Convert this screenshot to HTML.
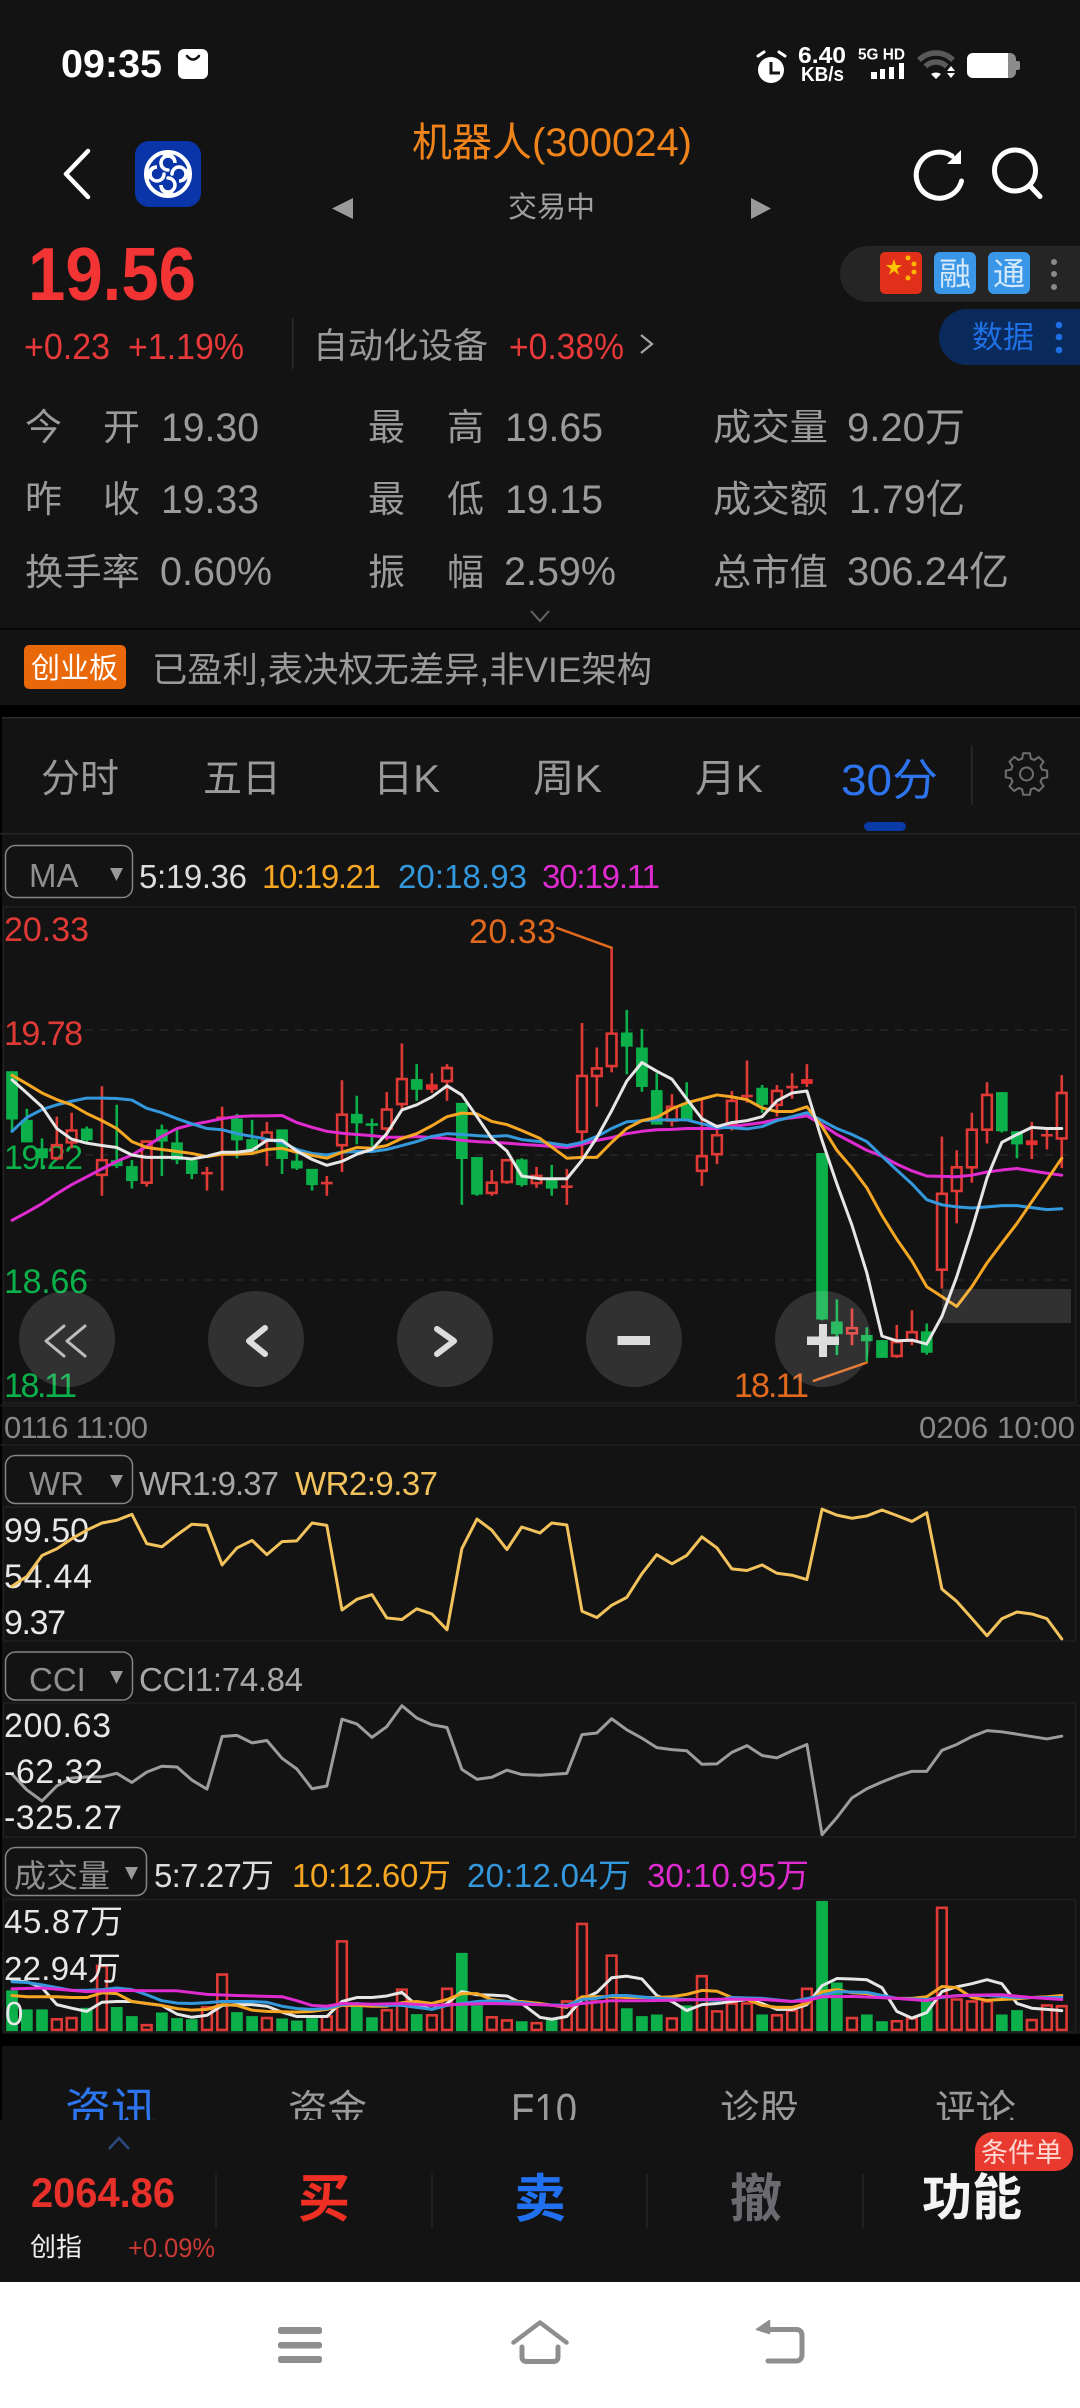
<!DOCTYPE html>
<html><head><meta charset="utf-8"><style>
html,body{margin:0;padding:0;background:#131313;width:1080px;height:2408px;overflow:hidden}
svg{display:block;position:absolute;left:0;top:0}
text{font-family:"Liberation Sans","Noto Sans CJK SC",sans-serif;white-space:pre}
.c *{vector-effect:non-scaling-stroke;fill:none;stroke-linejoin:round;stroke-linecap:round}
.c .g{fill:#0bb04a;stroke:none}
.c .gw{stroke:#0bb04a;stroke-width:2.6;stroke-linecap:butt}
.c .rw{stroke:#e03a36;stroke-width:2.6;stroke-linecap:butt}
.c .rb{stroke:#e03a36;stroke-width:2.6;stroke-linejoin:miter}
.c .rf{fill:#e8302e;stroke:none}
.w{stroke:#e6e6e6;stroke-width:3}.o{stroke:#f5a623;stroke-width:3}.b{stroke:#3498dc;stroke-width:3}.m{stroke:#e02bd0;stroke-width:3}
.n{font-size:40px;fill:#9b9b9b}.k{font-size:37px;fill:#9b9b9b}
.l{font-size:33px}.t{font-size:39px;fill:#9a9a9a}
</style></head><body>
<svg width="1080" height="2408" viewBox="0 0 1080 2408">
<rect width="1080" height="2408" fill="#131313"/>
<rect y="628" width="1080" height="1.5" fill="#050505"/>
<rect y="705" width="1080" height="12" fill="#000"/>
<rect y="717" width="1080" height="1.5" fill="#2a2a2a"/>
<rect y="717" width="2" height="1403" fill="#000"/>
<rect y="833" width="1080" height="1.5" fill="#262626"/>

<!-- status -->
<text x="61" y="77" font-size="39" font-weight="700" fill="#fff" textLength="101" lengthAdjust="spacingAndGlyphs">09:35</text>
<rect x="178" y="49" width="30" height="30" rx="6" fill="#fff"/>
<path d="M187 56Q193 63 199 56" stroke="#131313" stroke-width="2.5" fill="none" stroke-linecap="round"/>
<circle cx="771" cy="70" r="13" fill="#fff"/>
<path d="M771 62V73H780" stroke="#131313" stroke-width="3" fill="none"/>
<path d="M758 56L764 52M779 52L785 56" stroke="#fff" stroke-width="3" stroke-linecap="round"/>
<text x="798" y="63" font-size="23" font-weight="700" fill="#fff" textLength="48" lengthAdjust="spacingAndGlyphs">6.40</text>
<text x="801" y="81" font-size="20" font-weight="700" fill="#fff" textLength="43" lengthAdjust="spacingAndGlyphs">KB/s</text>
<text x="858" y="59.500" font-size="16" font-weight="700" fill="#fff" textLength="47" lengthAdjust="spacingAndGlyphs">5G HD</text>
<path d="M871 72h6v7h-6zM880 69h5v10h-5zM889 67h5v12h-5zM899 63h5v16h-5z" fill="#fff"/>
<path d="M919 60A24 24 0 0 1 953 60M925.4 66.4A15 15 0 0 1 946.6 66.4" stroke="#5a5a5a" stroke-width="5.5" fill="none"/>
<path d="M936 79L931 74Q936 71 941 74Z" fill="#fff"/>
<path d="M951 66l4 5h-8zM951 78l4-5h-8z" fill="#fff"/>
<rect x="967" y="53" width="49" height="25" rx="6" fill="#8c8c8c"/>
<path d="M973 53H1008V78H973A6 6 0 0 1 967 72V59A6 6 0 0 1 973 53Z" fill="#fff"/>
<path d="M1016 61h2q2 0 2 2v5q0 2-2 2h-2z" fill="#8c8c8c"/>

<!-- header -->
<path d="M88 151L66 174L88 197" stroke="#fff" stroke-width="4.500" fill="none" stroke-linecap="round" stroke-linejoin="round"/>
<rect x="135" y="141" width="66" height="66" rx="14" fill="#0a35a8"/>
<g fill="none" stroke="#fff" stroke-width="3.500" stroke-linecap="round">
<circle cx="168" cy="174" r="22" stroke-width="4"/>
<path d="M168 170A7 7 0 1 1 175 163Q175 155 164 154"/>
<path d="M172 174A7 7 0 1 1 179 181Q187 181 188 170"/>
<path d="M168 178A7 7 0 1 1 161 185Q161 193 172 194"/>
<path d="M164 174A7 7 0 1 1 157 167Q149 167 148 178"/>
</g>
<text x="412" y="156" font-size="40" fill="#f0841a" textLength="280" lengthAdjust="spacingAndGlyphs">机器人(300024)</text>
<path d="M353 198V219L332 208.5Z M751 198V219L771 208.5Z" fill="#9a9a9a"/>
<text x="508" y="217" font-size="29" fill="#a0a0a0">交易中</text>
<path d="M961.5 181A23 23 0 1 1 952 156" stroke="#fff" stroke-width="5" fill="none" stroke-linecap="round"/>
<path d="M947 164L961 164L961 150Z" fill="#fff"/>
<circle cx="1015" cy="170.5" r="20.5" stroke="#fff" stroke-width="5" fill="none"/>
<path d="M1031 187L1040 196.5" stroke="#fff" stroke-width="5" stroke-linecap="round"/>

<text x="28" y="300" font-size="75" font-weight="700" fill="#f23434" textLength="168" lengthAdjust="spacingAndGlyphs">19.56</text>
<text x="24" y="359" font-size="36" fill="#e8393a" textLength="86" lengthAdjust="spacingAndGlyphs">+0.23</text>
<text x="128" y="359" font-size="36" fill="#e8393a" textLength="116" lengthAdjust="spacingAndGlyphs">+1.19%</text>
<rect x="292" y="318" width="1.5" height="51" fill="#2a2a2a"/>
<text x="313" y="358" font-size="35" fill="#9a9a9a">自动化设备</text>
<text x="509" y="359" font-size="36" fill="#e8393a" textLength="115" lengthAdjust="spacingAndGlyphs">+0.38%</text>
<path d="M641 335L652 344L641 353" stroke="#a5a5a5" stroke-width="2.2" fill="none"/>

<path d="M868 246H1080V302H868A28 28 0 0 1 868 246Z" fill="#252525"/>
<rect x="880" y="252" width="42" height="42" rx="5" fill="#e0301a"/>
<path d="M894 259L896 265L902 265L897 269L899 275L894 271L889 275L891 269L886 265L892 265Z" fill="#ffc400"/>
<g fill="#ffb400"><circle cx="908" cy="258" r="2.5"/><circle cx="914" cy="264" r="2.5"/><circle cx="914" cy="272" r="2.5"/><circle cx="908" cy="278" r="2.5"/></g>
<rect x="934" y="252" width="42" height="42" rx="6" fill="#3a96e6"/>
<rect x="988" y="252" width="42" height="42" rx="6" fill="#3a96e6"/>
<text x="939" y="285" font-size="32" fill="#d3e8fb">融</text>
<text x="993" y="285" font-size="32" fill="#d3e8fb">通</text>
<g fill="#8a8a8a"><circle cx="1054" cy="262" r="3"/><circle cx="1054" cy="274" r="3"/><circle cx="1054" cy="287" r="3"/></g>
<path d="M967 309H1080V365H967A28 28 0 0 1 967 309Z" fill="#0b2a5c"/>
<text x="972" y="348" font-size="31" fill="#1f6fe5">数据</text>
<g fill="#1f6fe5"><circle cx="1059" cy="325" r="3.3"/><circle cx="1059" cy="337" r="3.3"/><circle cx="1059" cy="350" r="3.3"/></g>

<!-- quote table -->
<g class="k">
<text x="25" y="440">今</text><text x="103" y="440">开</text>
<text x="25" y="512">昨</text><text x="103" y="512">收</text>
<text x="25" y="585" textLength="115" lengthAdjust="spacingAndGlyphs">换手率</text>
<text x="368" y="440">最</text><text x="447" y="440">高</text>
<text x="368" y="512">最</text><text x="447" y="512">低</text>
<text x="368" y="585">振</text><text x="447" y="585">幅</text>
<text x="713" y="440" textLength="115" lengthAdjust="spacingAndGlyphs">成交量</text><text x="713" y="512" textLength="115" lengthAdjust="spacingAndGlyphs">成交额</text><text x="713" y="585" textLength="115" lengthAdjust="spacingAndGlyphs">总市值</text>
</g>
<g class="n">
<text x="161" y="441" textLength="98" lengthAdjust="spacingAndGlyphs">19.30</text>
<text x="161" y="513" textLength="98" lengthAdjust="spacingAndGlyphs">19.33</text>
<text x="160" y="585" textLength="112" lengthAdjust="spacingAndGlyphs">0.60%</text>
<text x="505" y="441" textLength="98" lengthAdjust="spacingAndGlyphs">19.65</text>
<text x="505" y="513" textLength="98" lengthAdjust="spacingAndGlyphs">19.15</text>
<text x="504" y="585" textLength="112" lengthAdjust="spacingAndGlyphs">2.59%</text>
<text x="847" y="441" textLength="118" lengthAdjust="spacingAndGlyphs">9.20万</text>
<text x="849" y="513" textLength="116" lengthAdjust="spacingAndGlyphs">1.79亿</text>
<text x="847" y="585" textLength="162" lengthAdjust="spacingAndGlyphs">306.24亿</text>
</g>
<path d="M531 611L540 621L549 611" stroke="#666" stroke-width="2" fill="none"/>
<rect x="24" y="645" width="102" height="44" rx="5" fill="#e8680a"/>
<text x="31" y="678" font-size="29" fill="#fff">创业板</text>
<text x="152" y="682" font-size="35" fill="#9a9a9a" textLength="500" lengthAdjust="spacingAndGlyphs">已盈利,表决权无差异,非VIE架构</text>

<!-- period tabs -->
<text x="41" y="792" class="t">分时</text>
<text x="203" y="792" class="t">五日</text>
<text x="373" y="792" class="t" textLength="67" lengthAdjust="spacingAndGlyphs">日K</text>
<text x="533" y="792" class="t" textLength="69" lengthAdjust="spacingAndGlyphs">周K</text>
<text x="695" y="792" class="t" textLength="68" lengthAdjust="spacingAndGlyphs">月K</text>
<text x="841" y="795" font-size="44" fill="#2d74ee" textLength="97" lengthAdjust="spacingAndGlyphs">30分</text>
<rect x="971" y="745" width="1.5" height="60" fill="#2a2a2a"/>
<rect x="864" y="822" width="42" height="9" rx="4.5" fill="#0a3aa5"/>
<g transform="translate(1026.5 774)" fill="none" stroke="#6e6e6e" stroke-width="2">
<path d="M-3.3-20.7L3.3-20.7L4.4-15.4L7.8-14L12.3-17L17-12.3L14-7.8L15.4-4.4L20.7-3.3L20.7 3.3L15.4 4.4L14 7.8L17 12.3L12.3 17L7.8 14L4.4 15.4L3.3 20.7L-3.3 20.7L-4.4 15.4L-7.8 14L-12.3 17L-17 12.3L-14 7.8L-15.4 4.4L-20.7 3.3L-20.7-3.3L-15.4-4.4L-14-7.8L-17-12.3L-12.3-17L-7.8-14L-4.4-15.4Z"/>
<circle r="6.5"/></g>

<!-- MA header -->
<rect x="5.5" y="845.5" width="127" height="52" rx="10" fill="none" stroke="#858585" stroke-width="1.5"/>
<text x="29" y="887" class="l" fill="#8f8f8f">MA</text>
<path d="M110 868H123L116.500 881Z" fill="#999"/>
<text x="139" y="888" class="l" fill="#ddd" textLength="108">5:19.36</text>
<text x="262" y="888" class="l" fill="#f5a623" textLength="119">10:19.21</text>
<text x="398" y="888" class="l" fill="#3498dc" textLength="129">20:18.93</text>
<text x="542" y="888" class="l" fill="#e02bd0" textLength="118">30:19.11</text>

<!-- chart frames -->
<g fill="none" stroke="#1f1f1f" stroke-width="1.5">
<rect x="3.500" y="907" width="1072" height="496"/><path d="M0 1405.500H1080M0 1445H1080"/>
<rect x="3.500" y="1507" width="1072" height="134"/>
<rect x="3.500" y="1703" width="1072" height="134"/>
<rect x="3.500" y="1899.500" width="1072" height="132.500"/>
</g>
<path d="M85 1030H1070M85 1155H1070M85 1280H1070" stroke="#2a2a2a" stroke-width="1.2" stroke-dasharray="8 7" fill="none"/>

<g class="l">
<text x="4" y="941" fill="#e03a36" textLength="85" style="font-size:34px">20.33</text>
<text x="4" y="1045" fill="#e03a36" textLength="79" style="font-size:34px">19.78</text>
<text x="4" y="1169" fill="#0bb04a" textLength="79" style="font-size:34px">19.22</text>
<text x="4" y="1293" fill="#0bb04a" textLength="84" style="font-size:34px">18.66</text>
<text x="4" y="1397" fill="#0bb04a" textLength="73" style="font-size:34px">18.11</text>
<text x="469" y="943" fill="#e0691e" textLength="87" style="font-size:34px">20.33</text>
<text x="734" y="1397" fill="#e0691e" textLength="75" style="font-size:34px">18.11</text>
</g>

<!-- Kline left -->
<g class="c" transform="translate(0 830) scale(.34439 .39541)">
<path class="gw" d="M35 610V765M78 705V790M122 780V858M252 750V790M339 695V855M383 835V907M470 745V875M514 755V845M557 835V883M688 718V830M732 733V815M819 757V870M862 815V860M906 857V912M1036 672V795M1080 730V800M1210 592V685M1341 690V948M1385 827V925M1515 830V902M1062 745H1098"/>
<path class="g" d="M18 610H52V732H18ZM61 733H95V790H61ZM105 805H139V830H105ZM235 755H269V785H235ZM322 835H356V850H322ZM366 850H400V888H366ZM453 757H487V788H453ZM497 790H531V835H497ZM540 835H574V870H540ZM671 730H705V785H671ZM715 782H749V810H715ZM802 757H836V832H802ZM845 836H879V856H845ZM889 857H923V898H889ZM1019 718H1053V742H1019ZM1193 630H1227V657H1193ZM1324 690H1358V832H1324ZM1368 827H1402V922H1368ZM1498 833H1532V898H1498Z"/>
<path class="rw" d="M165 725V797M165 830V835M208 715V760M208 790V805M296 648V835M296 872V925M426 785V788M426 892V902M601 852V912M584 868H618M645 700V912M628 728H662M775 738V765M775 785V850M949 875V925M932 893H966M993 633V720M993 797V865M1123 663V707M1123 755V785M1167 540V630M1167 693V705M1254 615V665M1298 592V602M1298 635V685M1428 860V892M1428 918V925M1472 890V895M1558 852V875M1558 893V905"/>
<path class="rb" d="M151 797H179V830H151ZM194 760H222V790H194ZM282 835H310V872H282ZM412 788H440V892H412ZM761 765H789V785H761ZM979 720H1007V797H979ZM1109 707H1137V755H1109ZM1153 630H1181V693H1153ZM1284 602H1312V635H1284ZM1414 892H1442V918H1414ZM1458 835H1486V890H1458ZM1544 875H1572V893H1544Z"/>
<path class="rf" d="M1237 643H1271V657H1237Z"/>
<polyline class="m" points="35,987 78,967 122,945 165,920 208,897 252,877 296,857 339,838 383,822 426,800 470,775 514,755 557,745 601,738 645,730 688,725 732,723 775,723 819,722 862,740 906,752 949,762 993,767 1036,770 1080,773 1123,777 1167,777 1210,775 1254,778 1298,780 1341,785 1385,788 1428,790 1472,792 1515,795 1568,798"/>
<polyline class="b" points="35,762 78,727 122,707 165,695 208,686 252,678 296,678 339,679 383,683 426,704 470,715 514,730 557,743 601,755 645,758 688,768 732,775 775,782 819,790 862,808 906,818 949,822 993,815 1036,813 1080,813 1123,808 1167,798 1210,788 1254,775 1298,768 1341,770 1385,773 1428,775 1472,773 1515,783 1568,788"/>
<polyline class="o" points="35,620 78,642 122,665 165,682 208,695 252,717 296,735 339,755 383,788 426,803 470,808 514,813 557,818 601,826 645,820 688,820 732,818 775,808 819,805 862,815 906,823 949,830 993,815 1036,803 1080,805 1123,798 1167,780 1210,768 1254,748 1298,725 1341,716 1385,718 1428,737 1472,745 1515,760 1568,780"/>
<polyline class="w" points="35,632 78,665 122,700 165,755 208,782 252,792 296,798 339,803 383,822 426,828 470,828 514,828 557,832 601,825 645,815 688,815 732,810 775,785 819,785 862,812 906,833 949,848 993,838 1036,820 1080,808 1123,768 1167,708 1210,695 1254,675 1298,647 1341,670 1385,725 1428,780 1472,812 1515,875 1568,882"/>
</g>
<!-- Kline right -->
<g class="c" transform="translate(540 830) scale(.34439 .39541)">
<path class="gw" d="M34 847V925M252 455V618M296 503V662M339 615V745M426 638V735M645 645V715M819 817V1240M862 1187V1328M949 1258V1345M993 1290V1335M1123 1248V1327M1341 663V765M1385 762V830"/>
<path class="g" d="M17 880H51V907H17ZM235 512H269V548H235ZM279 550H313V650H279ZM322 658H356V745H322ZM409 690H443V735H409ZM628 652H662V695H628ZM802 817H836V1238H802ZM845 1243H879V1275H845ZM932 1277H966V1293H932ZM976 1290H1010V1335H976ZM1106 1268H1140V1322H1106ZM1324 663H1358V762H1324ZM1368 762H1402V795H1368Z"/>
<path class="rw" d="M78 857V948M61 902H95M122 488V622M122 763V830M165 550V603M165 622V700M208 298V515M208 597V613M383 668V700M383 735V750M470 680V825M470 862V900M514 745V772M514 820V845M557 660V685M557 745V760M601 583V690M584 673H618M688 645V660M688 695V725M732 615V680M715 650H749M775 592V650M906 1210V1260M906 1273V1303M1036 1252V1295M1036 1330V1335M1080 1215V1270M1080 1292V1303M1167 775V920M1167 1112V1160M1210 810V853M1210 913V995M1254 715V758M1254 853V892M1298 638V670M1298 758V793M1428 738V832M1472 758V808M1455 772H1489M1515 620V665M1515 780V855"/>
<path class="rb" d="M108 622H136V763H108ZM151 603H179V622H151ZM194 515H222V597H194ZM369 700H397V735H369ZM456 825H484V862H456ZM500 772H528V820H500ZM543 685H571V745H543ZM674 660H702V695H674ZM892 1260H920V1273H892ZM1022 1295H1050V1330H1022ZM1066 1270H1094V1292H1066ZM1153 920H1181V1112H1153ZM1196 853H1224V913H1196ZM1240 758H1268V853H1240ZM1284 670H1312V758H1284ZM1501 665H1529V780H1501Z"/>
<path class="rf" d="M758 630H792V642H758ZM1411 785H1445V797H1411Z"/>
<polyline class="m" points="0,798 78,803 122,795 165,785 208,778 252,768 296,762 339,758 383,757 426,755 470,755 514,755 557,750 601,745 645,740 688,732 732,728 775,723 819,745 862,770 906,790 949,810 993,825 1036,845 1080,862 1123,875 1167,876 1210,877 1254,873 1298,865 1341,860 1385,856 1428,862 1472,868 1515,873"/>
<polyline class="b" points="0,788 78,798 122,790 165,775 208,755 252,738 296,735 339,733 383,733 426,733 470,743 514,752 557,753 601,756 645,750 688,735 732,725 775,715 819,735 862,755 906,770 949,788 993,825 1036,860 1080,895 1123,935 1167,948 1210,953 1254,956 1298,953 1341,950 1385,950 1428,955 1472,960 1515,958"/>
<polyline class="o" points="0,780 78,830 122,828 165,828 208,790 252,755 296,735 339,727 383,705 426,690 470,680 514,670 557,675 601,682 645,703 688,712 732,712 775,700 819,750 862,810 906,855 949,905 993,975 1036,1035 1080,1090 1123,1155 1167,1180 1210,1205 1254,1155 1298,1095 1341,1045 1385,995 1428,940 1472,885 1515,830"/>
<polyline class="w" points="0,882 78,882 122,835 165,778 208,710 252,635 296,588 339,610 383,630 426,680 470,730 514,750 557,740 601,735 645,725 688,685 732,665 775,660 819,785 862,895 906,1000 949,1120 993,1280 1036,1292 1080,1290 1123,1300 1167,1230 1210,1130 1254,1010 1298,880 1341,790 1385,770 1428,752 1472,755 1515,755"/>
<path stroke="#e0691e" style="stroke-width:2.500" d="M50 248L208 298M795 1393L949 1347"/>
</g>

<!-- overlay buttons -->
<g fill="#fff" fill-opacity=".13">
<circle cx="67" cy="1339" r="48"/><circle cx="256" cy="1339" r="48"/><circle cx="445" cy="1339" r="48"/><circle cx="634" cy="1339" r="48"/><circle cx="823" cy="1339" r="48"/>
<rect x="942" y="1289" width="129" height="34"/>
</g>
<path d="M64 1326L46 1341L64 1356M85 1326L67 1341L85 1356" stroke="#bdbdbd" stroke-width="3" fill="none" stroke-linecap="round" stroke-linejoin="round"/>
<path d="M265 1328L249 1341L265 1354M437 1329L454 1341L437 1354" stroke="#ddd" stroke-width="6" fill="none" stroke-linejoin="round" stroke-linecap="round"/>
<path d="M617.500 1336H650V1345H617.500ZM807 1336.500H839V1345H807ZM819 1324H827V1357H819Z" fill="#ddd"/>

<text x="4" y="1438" font-size="31" fill="#888" textLength="144">0116 11:00</text>
<text x="919" y="1438" font-size="31" fill="#888" textLength="156">0206 10:00</text>

<!-- WR -->
<rect x="5.500" y="1455.500" width="127" height="48" rx="10" fill="none" stroke="#858585" stroke-width="1.500"/>
<text x="29" y="1495" class="l" fill="#8f8f8f">WR</text>
<path d="M110 1475H123L116.500 1488Z" fill="#999"/>
<text x="139" y="1495" class="l" fill="#a8a8a8" textLength="140">WR1:9.37</text>
<text x="295" y="1495" class="l" fill="#f2c25c" textLength="143">WR2:9.37</text>
<g fill="#e8e8e8">
<text x="4" y="1542" textLength="85" style="font-size:34px">99.50</text>
<text x="4" y="1588" textLength="88" style="font-size:34px">54.44</text>
<text x="4" y="1634" textLength="62" style="font-size:34px">9.37</text>
</g>
<!-- CCI -->
<rect x="5.500" y="1652" width="127" height="48" rx="10" fill="none" stroke="#858585" stroke-width="1.500"/>
<text x="29" y="1691" class="l" fill="#8f8f8f">CCI</text>
<path d="M110 1671H123L116.500 1684Z" fill="#999"/>
<text x="139" y="1691" class="l" fill="#a8a8a8" textLength="164">CCI1:74.84</text>
<g class="c">
<g transform="translate(0 1440) scale(.34439 .39541)">
<polyline stroke="#f2c25c" style="stroke-width:3" points="35,370 78,345 122,292 165,275 208,250 252,228 296,210 339,203 383,188 426,262 470,270 514,240 557,213 601,216 645,316 688,273 732,254 775,290 819,257 862,255 906,210 949,216 993,430 1036,403 1080,391 1123,450 1167,454 1210,427 1254,440 1298,480 1341,275 1385,200 1428,228 1472,277 1515,220 1568,235"/>
<polyline stroke="#9c9c9c" style="stroke-width:3" points="35,845 78,885 122,913 165,875 208,855 252,852 296,852 339,843 383,866 426,840 470,825 514,827 557,860 601,883 645,750 688,747 732,766 775,760 819,805 862,832 906,882 949,875 993,706 1036,718 1080,752 1123,725 1167,672 1210,703 1254,720 1298,727 1341,833 1385,858 1428,853 1472,835 1515,846 1568,848"/>
<path class="rb" d="M151 1465H179V1492H151ZM194 1462H222V1492H194ZM282 1330H310V1492H282ZM412 1480H440V1492H412ZM587 1435H615V1492H587ZM631 1352H659V1492H631ZM761 1462H789V1492H761ZM935 1458H963V1492H935ZM979 1268H1007V1492H979ZM1109 1442H1137V1492H1109ZM1153 1390H1181V1492H1153ZM1240 1455H1268V1492H1240ZM1284 1388H1312V1492H1284ZM1414 1460H1442V1492H1414ZM1458 1468H1486V1492H1458ZM1544 1475H1572V1492H1544Z"/>
<path class="g" d="M18 1392H52V1495H18ZM61 1440H95V1495H61ZM105 1440H139V1495H105ZM235 1436H269V1495H235ZM322 1434H356V1495H322ZM366 1457H400V1495H366ZM453 1448H487V1495H453ZM497 1462H531V1495H497ZM540 1465H574V1495H540ZM671 1447H705V1495H671ZM715 1457H749V1495H715ZM802 1463H836V1495H802ZM845 1468H879V1495H845ZM889 1462H923V1495H889ZM1019 1432H1053V1495H1019ZM1063 1460H1097V1495H1063ZM1193 1452H1227V1495H1193ZM1324 1297H1358V1495H1324ZM1368 1430H1402V1495H1368ZM1498 1470H1532V1495H1498Z"/>
<polyline class="w" points="35,1368 78,1370 122,1385 165,1428 208,1437 252,1445 296,1422 339,1420 383,1420 426,1425 470,1430 514,1452 557,1460 601,1455 645,1430 688,1428 732,1428 775,1432 819,1447 862,1458 906,1458 949,1458 993,1420 1036,1410 1080,1410 1123,1406 1167,1397 1210,1430 1254,1440 1298,1425 1341,1395 1385,1403 1428,1404 1472,1406 1515,1425 1568,1460"/>
<polyline class="o" points="35,1405 78,1408 122,1408 165,1408 208,1410 252,1410 296,1398 339,1400 383,1420 426,1425 470,1430 514,1438 557,1442 601,1440 645,1428 688,1430 732,1442 775,1445 819,1446 862,1447 906,1445 949,1440 993,1430 1036,1430 1080,1432 1123,1432 1167,1423 1210,1420 1254,1425 1298,1415 1341,1400 1385,1400 1428,1415 1472,1420 1515,1420 1568,1425"/>
<polyline class="b" points="35,1370 78,1372 122,1378 165,1385 208,1392 252,1392 296,1390 339,1386 383,1390 426,1403 470,1418 514,1424 557,1425 601,1423 645,1420 688,1420 732,1420 775,1422 819,1432 862,1438 906,1440 949,1438 993,1428 1036,1425 1080,1428 1123,1430 1167,1430 1210,1435 1254,1440 1298,1430 1341,1425 1385,1420 1428,1418 1472,1420 1515,1423 1568,1428"/>
<polyline class="m" points="35,1388 122,1386 208,1392 252,1395 339,1392 426,1393 514,1393 601,1402 688,1405 775,1407 819,1408 862,1418 906,1430 949,1432 993,1425 1080,1427 1167,1425 1254,1430 1341,1427 1428,1425 1568,1428"/>
</g>
<g transform="translate(540 1440) scale(.34439 .39541)">
<polyline stroke="#f2c25c" style="stroke-width:3" points="0,235 34,210 78,215 122,433 165,449 208,418 252,398 296,338 339,290 383,313 426,292 470,245 514,273 557,326 601,330 645,316 688,337 732,342 775,353 819,175 862,190 906,198 949,192 993,177 1036,191 1080,206 1123,184 1167,377 1210,408 1254,451 1298,495 1341,452 1385,435 1428,440 1472,452 1515,503"/>
<polyline stroke="#9c9c9c" style="stroke-width:3" points="0,848 78,843 122,745 165,741 208,705 252,733 296,754 339,778 383,783 426,786 470,820 514,819 557,790 601,773 645,798 688,804 732,786 775,770 819,998 862,955 906,905 949,882 993,865 1036,850 1080,838 1123,838 1167,785 1210,770 1254,750 1298,735 1341,738 1385,744 1428,750 1472,756 1515,749"/>
<path class="rb" d="M64 1420H92V1492H64ZM108 1224H136V1492H108ZM151 1420H179V1492H151ZM194 1304H222V1492H194ZM369 1463H397V1492H369ZM456 1356H484V1492H456ZM500 1445H528V1492H500ZM543 1425H571V1492H543ZM587 1425H615V1492H587ZM674 1455H702V1492H674ZM718 1443H746V1492H718ZM761 1388H789V1492H761ZM892 1462H920V1492H892ZM1022 1470H1050V1492H1022ZM1066 1463H1094V1492H1066ZM1153 1183H1181V1492H1153ZM1196 1415H1224V1492H1196ZM1240 1420H1268V1492H1240ZM1284 1420H1312V1492H1284ZM1414 1467H1442V1492H1414ZM1458 1430H1486V1492H1458ZM1501 1432H1529V1492H1501Z"/>
<path class="g" d="M17 1467H51V1495H17ZM235 1437H269V1495H235ZM279 1457H313V1495H279ZM322 1453H356V1495H322ZM409 1430H443V1495H409ZM628 1453H662V1495H628ZM802 1166H836V1495H802ZM845 1372H879V1495H845ZM932 1453H966V1495H932ZM976 1470H1010V1495H976ZM1106 1420H1140V1495H1106ZM1324 1453H1358V1495H1324ZM1368 1442H1402V1495H1368Z"/>
<polyline class="w" points="0,1460 34,1465 78,1458 122,1415 165,1397 208,1360 252,1356 296,1363 339,1405 383,1420 426,1443 470,1428 514,1425 557,1420 601,1415 645,1425 688,1440 732,1440 775,1428 819,1380 862,1362 906,1363 949,1365 993,1385 1036,1445 1080,1462 1123,1448 1167,1395 1210,1383 1254,1375 1298,1365 1341,1375 1385,1425 1428,1437 1472,1440 1515,1443"/>
<polyline class="o" points="0,1425 78,1435 122,1408 165,1408 208,1408 252,1410 339,1410 383,1408 426,1402 470,1392 514,1394 557,1410 601,1415 645,1430 688,1435 732,1435 775,1425 819,1395 862,1390 906,1398 949,1400 993,1410 1036,1412 1080,1412 1123,1408 1167,1382 1210,1385 1254,1410 1298,1417 1341,1415 1385,1413 1428,1410 1472,1408 1515,1405"/>
<polyline class="b" points="0,1428 78,1430 122,1415 165,1412 208,1405 252,1405 339,1412 426,1415 514,1417 557,1410 645,1412 732,1420 819,1405 862,1395 949,1397 1036,1412 1123,1415 1210,1405 1298,1405 1385,1410 1515,1410"/>
<polyline class="m" points="0,1428 78,1432 122,1425 208,1418 296,1418 383,1417 470,1415 557,1414 645,1415 732,1420 775,1418 819,1408 906,1407 1036,1412 1123,1418 1167,1408 1254,1404 1341,1403 1428,1410 1515,1415"/>
</g>
</g>
<g fill="#e8e8e8">
<text x="4" y="1737" textLength="107" style="font-size:34px">200.63</text>
<text x="4" y="1783" textLength="99" style="font-size:34px">-62.32</text>
<text x="4" y="1829" textLength="118" style="font-size:34px">-325.27</text>
<text x="4" y="1933" textLength="119" style="font-size:33px">45.87万</text>
<text x="4" y="1980" textLength="117" style="font-size:33px">22.94万</text>
<text x="5" y="2025" style="font-size:33px">0</text>
</g>
<!-- VOL header -->
<rect x="5.500" y="1847.500" width="141" height="48" rx="10" fill="none" stroke="#858585" stroke-width="1.500"/>
<text x="14" y="1887" font-size="32" fill="#8f8f8f">成交量</text>
<path d="M125 1867H138L131.500 1880Z" fill="#999"/>
<text x="154" y="1887" class="l" fill="#ddd" textLength="120">5:7.27万</text>
<text x="292" y="1887" class="l" fill="#f5a623" textLength="159">10:12.60万</text>
<text x="467" y="1887" class="l" fill="#3498dc" textLength="164">20:12.04万</text>
<text x="647" y="1887" class="l" fill="#e02bd0" textLength="162">30:10.95万</text>

<rect y="2034" width="1080" height="12" fill="#000"/>
<!-- bottom tabs -->
<text x="65" y="2126" font-size="46" fill="#2d74ee" textLength="92" lengthAdjust="spacingAndGlyphs">资讯</text>
<text x="288" y="2123" class="t" textLength="79" lengthAdjust="spacingAndGlyphs">资金</text>
<text x="511" y="2124" font-size="44" fill="#9a9a9a" textLength="66" lengthAdjust="spacingAndGlyphs">F10</text>
<text x="720" y="2123" class="t" textLength="79" lengthAdjust="spacingAndGlyphs">诊股</text>
<text x="935" y="2123" class="t" textLength="81" lengthAdjust="spacingAndGlyphs">评论</text>
<!-- trade bar -->
<rect y="2120" width="1080" height="162" fill="#131313"/>
<path d="M109 2149L119 2138L129 2149" stroke="#2c4a7c" stroke-width="2.500" fill="none"/>
<text x="31" y="2207" font-size="42" font-weight="700" fill="#e8302a" textLength="144" lengthAdjust="spacingAndGlyphs">2064.86</text>
<text x="30" y="2256" font-size="26" fill="#eee">创指</text>
<text x="128" y="2257" font-size="27" fill="#c93a36" textLength="87" lengthAdjust="spacingAndGlyphs">+0.09%</text>
<path d="M216 2174V2228M432 2174V2228M647 2174V2228M863 2174V2228" stroke="#242424" stroke-width="1.500"/>
<text x="298" y="2217" font-size="52" font-weight="700" fill="#ee3024">买</text>
<text x="514" y="2217" font-size="52" font-weight="700" fill="#2070f0">卖</text>
<text x="730" y="2217" font-size="52" font-weight="700" fill="#6a6a70">撤</text>
<text x="922" y="2215" font-size="50" font-weight="700" fill="#f4f4f4">功能</text>
<path d="M993 2132H1055A18 18 0 0 1 1073 2150V2153A18 18 0 0 1 1055 2171H975V2150A18 18 0 0 1 993 2132Z" fill="#e93a2f"/>
<text x="981" y="2162" font-size="27" fill="#ffd9d3">条件单</text>

<!-- nav -->
<rect y="2282" width="1080" height="126" fill="#fff"/>
<g fill="#8e8e8e"><rect x="278" y="2327" width="44" height="7" rx="2.500"/><rect x="278" y="2342" width="44" height="6.500" rx="2.500"/><rect x="278" y="2356" width="44" height="7" rx="2.500"/></g>
<path d="M513.500 2342.500L540 2322.500L566.500 2342.500" stroke="#8e8e8e" stroke-width="4.500" fill="none" stroke-linecap="round" stroke-linejoin="round"/>
<path d="M522 2347V2357Q522 2361.500 527 2361.500H553Q558 2361.500 558 2357V2347" stroke="#8e8e8e" stroke-width="5" fill="none" stroke-linecap="round"/>
<path d="M769.500 2320.500L756.500 2329.500L769.500 2333.500Z" fill="#8e8e8e" stroke="#8e8e8e" stroke-width="1.500" stroke-linejoin="round"/>
<path d="M762 2329.500H796Q802 2329.500 802 2336V2354Q802 2361 796 2361H768" stroke="#8e8e8e" stroke-width="5" fill="none" stroke-linecap="round"/>
</svg>
</body></html>
